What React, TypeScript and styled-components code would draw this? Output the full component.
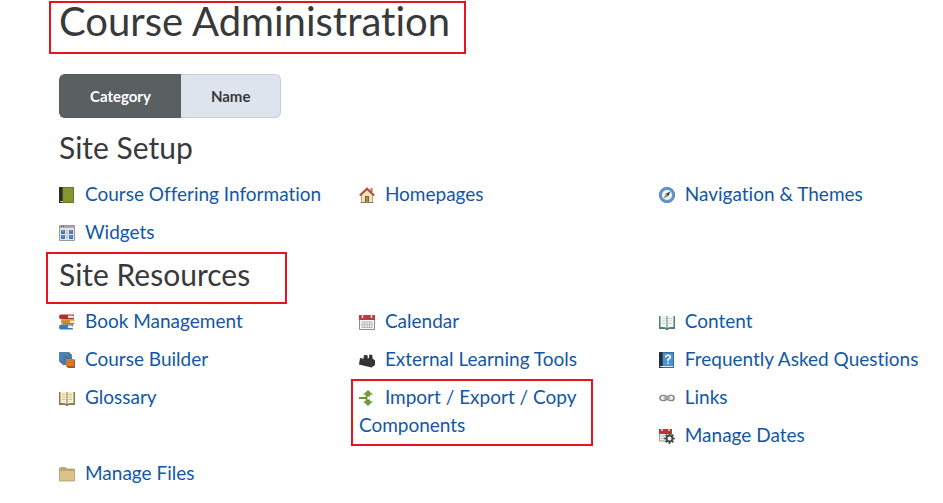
import React, { useState } from "react";
import styled, { createGlobalStyle, css } from "styled-components";

const GlobalStyle = createGlobalStyle`
  * { box-sizing: border-box; }
  body {
    margin: 0;
    background: #fff;
    color: #38393b;
    font-family: Lato, "Open Sans", sans-serif;
    font-size: 19px;
    line-height: 28px;
    font-variant-ligatures: none;
  }
`;

const Page = styled.main`
  padding: 0 2px 12px 59px;
`;

const marked = css`
  position: relative;
  &::after {
    content: "";
    position: absolute;
    border: 2px solid #e8141c;
    pointer-events: none;
  }
`;

const PageTitle = styled.h1`
  ${marked}
  width: fit-content;
  margin: 0;
  font-size: 40px;
  line-height: 42px;
  font-weight: 400;
  &::after { inset: 1px -16px -12px -10px; }
`;

const SectionTitle = styled.h2<{ $marked?: boolean }>`
  width: fit-content;
  margin: 0;
  font-size: 30px;
  line-height: 38px;
  font-weight: 400;
  ${(p) => p.$marked && marked}
  ${(p) => p.$marked && css`&::after { inset: -3px -37px -11px -13px; }`}
`;

const Tabs = styled.div`
  display: flex;
  width: fit-content;
  margin: 32px 0 10px;
`;

const Tab = styled.button<{ $active: boolean }>`
  height: 44px;
  padding: 0 30px;
  border: 1px solid ${(p) => (p.$active ? "#565a5c" : "#c3cbd6")};
  background: ${(p) => (p.$active ? "#5a5f61" : "#dde4ee")};
  color: ${(p) => (p.$active ? "#fff" : "#38393b")};
  font: 700 15px/20px Lato, sans-serif;
  cursor: pointer;
  &:first-child { border-radius: 6px 0 0 6px; border-right: 0; }
  &:last-child { border-radius: 0 6px 6px 0; border-left: 0; }
`;

const ToolGrid = styled.ul`
  display: grid;
  grid-template-columns: 34fr 34fr 32fr;
  row-gap: 10px;
  margin: 0;
  padding: 14px 0 9px;
  list-style: none;
`;

const ToolItem = styled.li<{ $tall?: boolean; $last?: boolean }>`
  padding-right: 20px;
  ${(p) => p.$last && css`grid-column: 3; padding-right: 0;`}
  ${(p) =>
    p.$tall &&
    css`
      ${marked}
      grid-row: span 2;
      padding-right: 64px;
      &::after { inset: -4px 66px 3px -8px; }
    `}
`;

const ToolLink = styled.a`
  color: #1257a6;
  text-decoration: none;
  &:hover { text-decoration: underline; }
`;

const Icon = styled.svg`
  width: 16px;
  height: 16px;
  margin-right: 10px;
  vertical-align: -2px;
`;

type IconName = keyof typeof drawings;

const OpenBook = ({ cover, page, ink }: { cover: string; page: string; ink: string }) => (
  <>
    <path d="M0 2h16v13H9.500l-.5 1H7l-.5-1H0z" fill={cover} />
    <path d="M1.500 1.500Q5.500 1 8 2.500V14q-2.500-1.500-6.500-1zM14.500 1.500Q10.500 1 8 2.500V14q2.500-1.500 6.500-1z" fill={page} />
    <path d="M8 2.500v11.500" stroke={cover} />
    <path d="M3 4.500h3.500M3 7h3.500M3 9.500h3.500M9.500 4.500H13M9.500 7H13M9.500 9.500H13" stroke={ink} strokeWidth=".6" />
  </>
);

const drawings = {
  book: (
    <>
      <path d="M0 0h15v16H0z" fill="#697625" />
      <path d="M4 1h10v14H4z" fill="#849632" />
      <path d="M0 0h3.500v16H0z" fill="#292b25" />
      <path d="M1 14h3v1H1z" fill="#c8c8b0" />
    </>
  ),
  home: (
    <>
      <path d="M11.500 1h2v4h-2z" fill="#b9734f" />
      <path d="M2.500 8 8 3l5.500 5v7.500h-11z" fill="#f1e2b8" stroke="#b88b60" strokeWidth=".8" />
      <path d="M6 9h4v6.500H6z" fill="#7d6242" />
      <path d="M7 10h2v5H7z" fill="#a88758" />
      <path d="M.8 8.500 8 1.500l7.200 7" fill="none" stroke="#b34b40" strokeWidth="1.800" />
      <path d="M1.500 15.500H6m4 0h4.500" stroke="#71894e" />
    </>
  ),
  compass: (
    <>
      <circle cx="8" cy="8" r="6.500" fill="#f1f4f5" stroke="#6797ca" strokeWidth="3" />
      <circle cx="8" cy="8" r="7.500" fill="none" stroke="#5280b5" strokeWidth=".8" />
      <path d="m11.500 4.500-2.200 4.800-2.600-2.600z" fill="#363c42" />
      <path d="m4.500 11.500 2.200-4.800 2.600 2.600z" fill="#8d9294" />
    </>
  ),
  widgets: (
    <>
      <path d="M.5.5h15v15H.5z" fill="#e4e4e1" stroke="#989898" />
      <path d="M1 1h14v2H1z" fill="#aaa" />
      <path d="M2 1.500h1M4 1.500h1" stroke="#555" />
      <path d="M2 5h4v4H2zm0 5h4v4H2zm8-5h4v4h-4zm0 5h4v4h-4z" fill="#4476c2" />
      <path d="M7 5h2v9H7z" fill="#c8c9ca" />
      <path d="M3 6h1.500M11 6h1.500M3 11h1.500M11 11h1.500" stroke="#99b8e3" />
    </>
  ),
  books: (
    <>
      <path d="M2 .5h13v1L14 3l1 1.500v.5H2Q0 5 0 2.700T2 .5z" fill="#b52d33" />
      <path d="M9 1.500h5v2.500H9z" fill="#f3e8df" />
      <path d="M4 5.500h11.500v1l-.7 1.500.7 2H4q-2 0-2-2.200t2-2.300z" fill="#d28c2c" />
      <path d="M11 6.500h4V9h-4z" fill="#f3ead3" />
      <path d="M2 10.500h12v1L13 13l1 2v.5H2q-2 0-2-2.500t2-2.500z" fill="#397cb3" />
      <path d="M9 11.500h4V14H9z" fill="#edf0ee" />
      <path d="M2 5h13M4 10h11" stroke="#8d5232" strokeWidth=".7" />
    </>
  ),
  builder: (
    <>
      <path d="M0 0h10l3 3v10H4l-4-4z" fill="#356995" />
      <path d="M0 0h10v9H0z" fill="#4c83b1" />
      <path d="M3.500 3h9v9h-9z" fill="#4178a7" stroke="#6493b9" strokeWidth=".5" />
      <path d="M7 7h8l1 1v8H9l-2-2z" fill="#a9581c" />
      <path d="M7 7h8v7H7z" fill="#d5782c" />
    </>
  ),
  glossary: <OpenBook cover="#8b7a59" page="#f5efce" ink="#a7ad77" />,
  calendar: (
    <>
      <path d="M.5 2h15v13.500H.5z" fill="#f6f6f4" stroke="#8e8d89" />
      <path d="M0 1h16v5H0z" fill="#b93d40" />
      <path d="M3.500 0v4m9-4v4" stroke="#eee2df" strokeWidth="1.500" />
      <path d="M3 8h10v5.500H3zm0 2.750h10M5.500 8v5.500M8 8v5.500M10.500 8v5.500" fill="none" stroke="#aaa9a6" strokeWidth=".8" />
    </>
  ),
  brick: (
    <>
      <path d="M0 12.500 1 6l3.500.8L5 3l3.500.3.3 3.200L10 6l.3-3.500 3 .5.2 3.500L16 8.500V13l-3.500 2.500z" fill="#303234" />
      <path d="m1.500 7.500 11 3v4" fill="none" stroke="#47494b" strokeWidth=".6" />
    </>
  ),
  transfer: (
    <>
      <path d="M0 8h8M11 5.500H7.500v5H11M9 4v2m0 4v2" fill="none" stroke="#6b9137" strokeWidth="1.800" />
      <path d="m9 0 5 4.800H4zM9 16l5-4.800H4z" fill="#709a38" />
    </>
  ),
  content: <OpenBook cover="#507c79" page="#f6f6f1" ink="#b5bebb" />,
  faq: (
    <>
      <path d="M0 0h15v16H0z" fill="#366c9d" />
      <path d="M4 1h10v13H4z" fill="#4a93d1" />
      <path d="M0 0h3.500v16H0z" fill="#252d35" />
      <path d="M1 14h13v1H1z" fill="#dce5e9" />
      <path d="M6.700 5.300q0-2 2.300-2t2.300 1.900q0 1.200-2.300 2.300v1.700" fill="none" stroke="#fff" strokeWidth="1.600" />
      <path d="M8.200 10.500h1.600v1.500H8.200z" fill="#fff" />
    </>
  ),
  chain: (
    <>
      <rect x="1" y="5.500" width="6.500" height="5" rx="2.500" fill="none" stroke="#8b8b84" strokeWidth="1.700" />
      <rect x="8.500" y="5.500" width="6.500" height="5" rx="2.500" fill="none" stroke="#8b8b84" strokeWidth="1.700" />
      <path d="M4.500 8h7" stroke="#aaa9a1" strokeWidth="1.700" />
    </>
  ),
  dates: (
    <>
      <path d="M.5 2h12v11H.5z" fill="#f4f3f1" stroke="#999591" />
      <path d="M0 1h13v5H0z" fill="#bd3438" />
      <path d="M3 0v3m7-3v3" stroke="#efdedb" strokeWidth="1.500" />
      <path d="M2 8h4M2 10.500h4" stroke="#aaa" />
      <circle cx="10.500" cy="10.500" r="3" fill="#f7f7f5" stroke="#43484b" strokeWidth="2" />
      <path d="M10.500 5v2m0 7v2M5 10.500h2m7 0h2M6.600 6.600 8 8m5 5 1.400 1.400m0-7.800L13 8m-5 5-1.400 1.400" stroke="#43484b" strokeWidth="1.700" />
    </>
  ),
  folder: (
    <>
      <path d="M.5 4V2.500L1.500 1.500h5L8 3h7.500v12H.5z" fill="#bda86e" stroke="#aa965f" strokeWidth=".7" />
      <path d="M1 5h14v9.500H1z" fill="#d8c48b" />
    </>
  ),
};

interface ToolEntry {
  label: string;
  icon: IconName;
  tall?: boolean;
  last?: boolean;
}

const siteSetup: ToolEntry[] = [
  { label: "Course Offering Information", icon: "book" },
  { label: "Homepages", icon: "home" },
  { label: "Navigation & Themes", icon: "compass", last: true },
  { label: "Widgets", icon: "widgets" },
];

const siteResources: ToolEntry[] = [
  { label: "Book Management", icon: "books" },
  { label: "Calendar", icon: "calendar" },
  { label: "Content", icon: "content", last: true },
  { label: "Course Builder", icon: "builder" },
  { label: "External Learning Tools", icon: "brick" },
  { label: "Frequently Asked Questions", icon: "faq", last: true },
  { label: "Glossary", icon: "glossary" },
  { label: "Import / Export / Copy Components", icon: "transfer", tall: true },
  { label: "Links", icon: "chain", last: true },
  { label: "Manage Dates", icon: "dates", last: true },
  { label: "Manage Files", icon: "folder" },
];

const ToolList = ({ tools }: { tools: ToolEntry[] }) => (
  <ToolGrid>
    {tools.map((tool) => (
      <ToolItem key={tool.label} $tall={tool.tall} $last={tool.last}>
        <ToolLink href="#">
          <Icon viewBox="0 0 16 16" aria-hidden="true">{drawings[tool.icon]}</Icon>
          {tool.label}
        </ToolLink>
      </ToolItem>
    ))}
  </ToolGrid>
);

export default function App() {
  const [view, setView] = useState("Category");
  return (
    <>
      <GlobalStyle />
      <Page>
        <PageTitle>Course Administration</PageTitle>
        <Tabs>
          {["Category", "Name"].map((name) => (
            <Tab key={name} type="button" aria-pressed={view === name} $active={view === name} onClick={() => setView(name)}>
              {name}
            </Tab>
          ))}
        </Tabs>
        <SectionTitle>Site Setup</SectionTitle>
        <ToolList tools={siteSetup} />
        <SectionTitle $marked>Site Resources</SectionTitle>
        <ToolList tools={siteResources} />
      </Page>
    </>
  );
}
